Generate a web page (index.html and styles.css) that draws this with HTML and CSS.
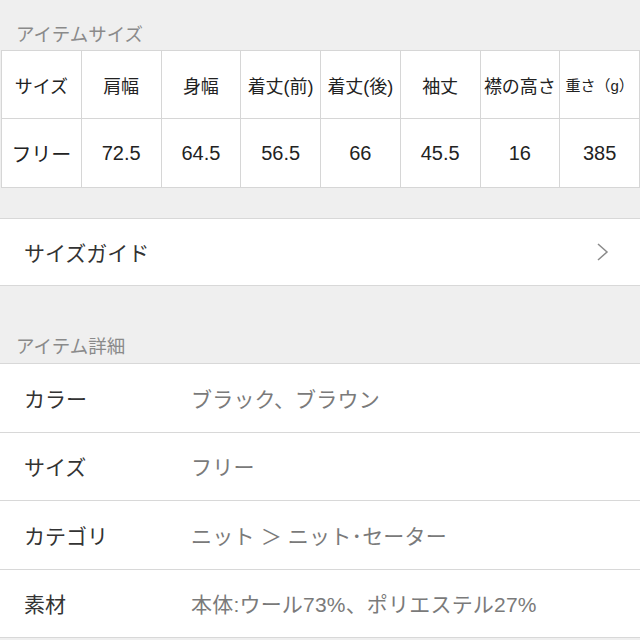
FILE: index.html
```html
<!DOCTYPE html>
<html lang="ja">
<head>
<meta charset="utf-8">
<link rel="stylesheet" href="styles.css">
</head>
<body>
<div class="page">
  <div class="section-title first">アイテムサイズ</div>
  <div class="size-table">
    <div class="cell head">サイズ</div>
    <div class="cell head">肩幅</div>
    <div class="cell head">身幅</div>
    <div class="cell head">着丈(前)</div>
    <div class="cell head">着丈(後)</div>
    <div class="cell head">袖丈</div>
    <div class="cell head">襟の高さ</div>
    <div class="cell head small">重さ（g）</div>
    <div class="cell val">フリー</div>
    <div class="cell val">72.5</div>
    <div class="cell val">64.5</div>
    <div class="cell val">56.5</div>
    <div class="cell val">66</div>
    <div class="cell val">45.5</div>
    <div class="cell val">16</div>
    <div class="cell val">385</div>
  </div>
  <div class="guide">
    <span>サイズガイド</span>
    <svg class="chev" width="14" height="20" viewBox="0 0 14 20"><path d="M2 2 L11 10 L2 18" fill="none" stroke="#8a8a8a" stroke-width="1.5"/></svg>
  </div>
  <div class="section-title second">アイテム詳細</div>
  <div class="details">
    <div class="row"><div class="label">カラー</div><div class="value">ブラック、ブラウン</div></div>
    <div class="row"><div class="label">サイズ</div><div class="value">フリー</div></div>
    <div class="row"><div class="label">カテゴリ</div><div class="value">ニット ＞ ニット･セーター</div></div>
    <div class="row"><div class="label">素材</div><div class="value">本体:ウール73%、ポリエステル27%</div></div>
  </div>
</div>
</body>
</html>
```
FILE: styles.css
```css
html, body {
  margin: 0;
  padding: 0;
  background: #efefef;
}
.page {
  width: 640px;
  height: 640px;
  overflow: hidden;
  font-family: "Liberation Sans", "Noto Sans CJK JP", sans-serif;
  color: #222;
}
.section-title {
  color: #8a8a8a;
  font-size: 18.5px;
  line-height: 24px;
  padding-left: 16px;
}
.section-title.first {
  padding-top: 23px;
  height: 27px;
  box-sizing: content-box;
}
.section-title.second {
  padding-top: 49px;
}
.size-table {
  margin-left: 1px;
  width: 637px;
  display: grid;
  grid-template-columns: repeat(8, 1fr);
  grid-template-rows: 67px 68px;
  background: #d6d6d6;
  gap: 1px;
  border: 1px solid #d6d6d6;
}
.cell {
  background: #fff;
  display: flex;
  align-items: center;
  justify-content: center;
  white-space: nowrap;
}
.cell.head {
  font-size: 18px;
}
.cell.head.small {
  font-size: 15px;
}
.cell.val {
  font-size: 20px;
  padding-top: 1px;
}
.guide {
  margin-top: 30px;
  height: 66px;
  background: #fff;
  border-top: 1px solid #d8d8d8;
  border-bottom: 1px solid #d8d8d8;
  display: flex;
  align-items: center;
  justify-content: space-between;
  padding: 0 30px 0 24px;
  font-size: 21px;
  color: #333;
}
.details {
  margin-top: 4px;
  background: #fff;
  border-top: 1px solid #d8d8d8;
}
.row {
  height: 67.5px;
  display: flex;
  align-items: center;
  border-bottom: 1px solid #d8d8d8;
  font-size: 21px;
}
.label {
  width: 167px;
  padding-left: 24px;
  color: #333;
}
.value {
  color: #7a7a7a;
  letter-spacing: 0.2px;
}
```
